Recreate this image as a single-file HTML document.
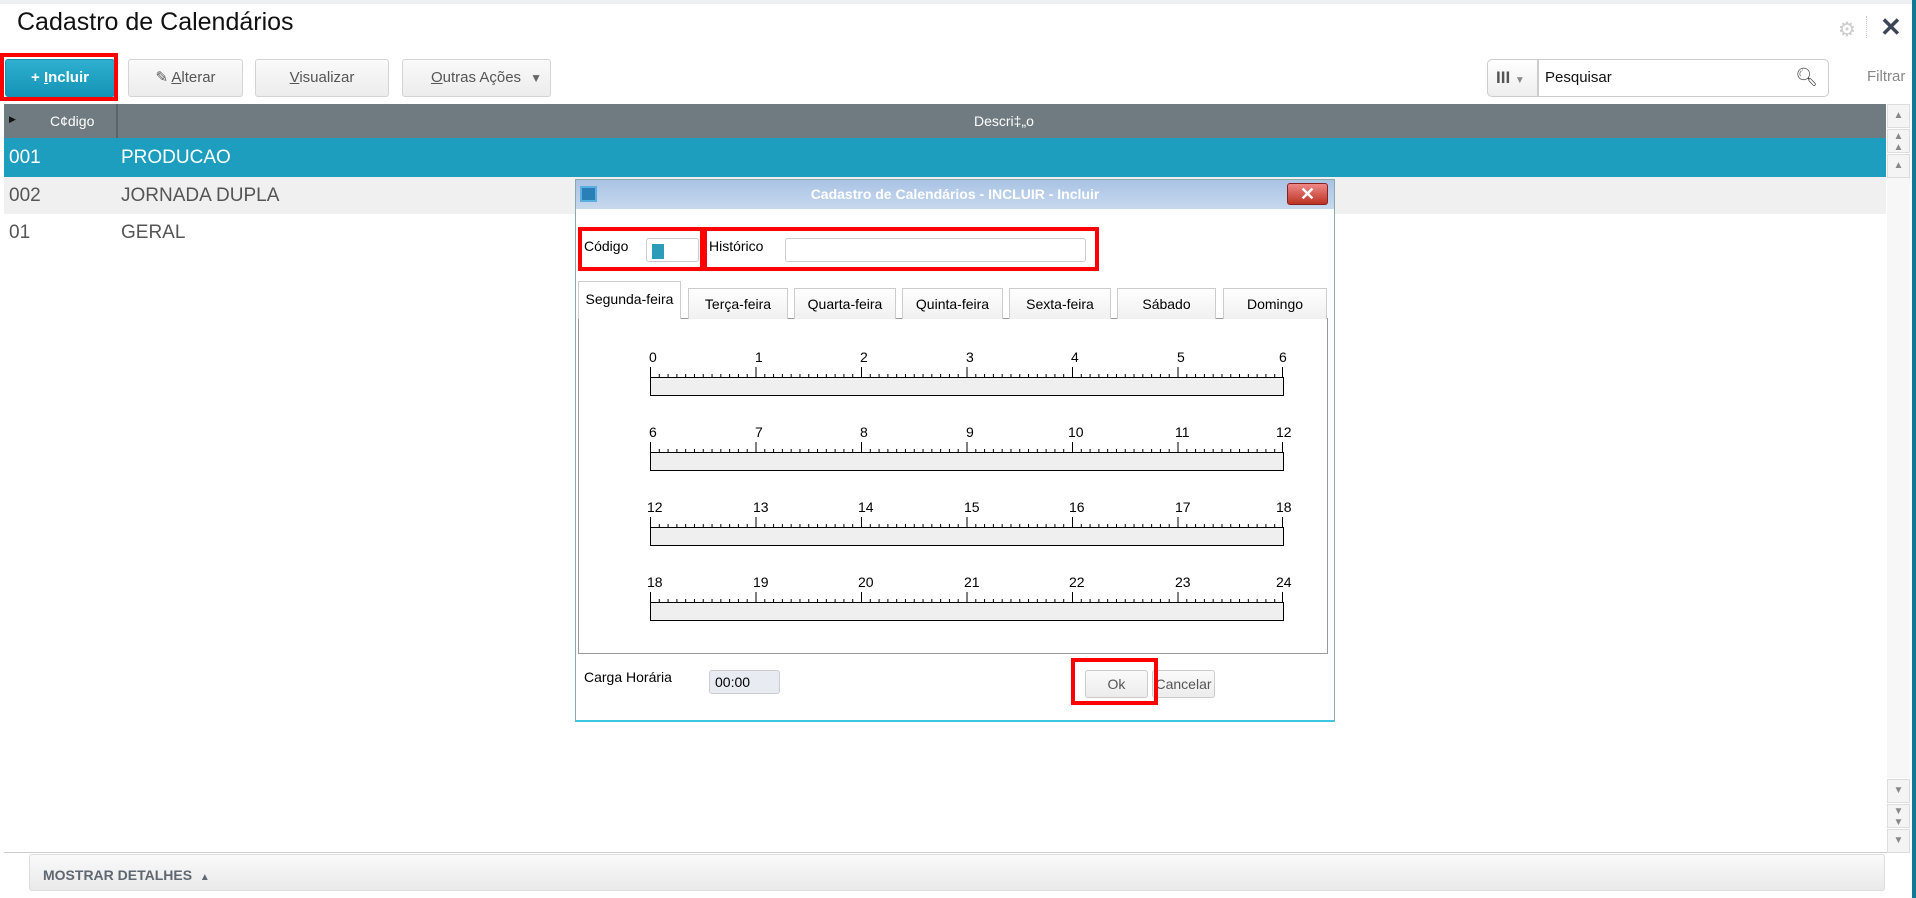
<!DOCTYPE html>
<html><head><meta charset="utf-8"><style>
*{box-sizing:border-box;margin:0;padding:0}
body{width:1916px;height:898px;position:relative;background:#fff;font-family:"Liberation Sans",sans-serif;overflow:hidden}
.a{position:absolute}
.btn{position:absolute;top:59px;height:38px;border:1px solid #d4d4d4;border-radius:3px;background:linear-gradient(#fafafa,#ececec);color:#555;font-size:15px;text-align:center;line-height:36px}
.row{position:absolute;left:4px;width:1882px;font-size:19px;color:#555}
.row span{position:absolute}
.tab{position:absolute;top:288px;height:31px;border:1px solid #ccc;border-bottom:none;background:linear-gradient(#fff,#f0f0f0);font-size:14px;color:#000;text-align:center;line-height:30px}
.red{position:absolute;border:4px solid #f00}
.sb{position:absolute;left:1887px;width:23px;height:24px;background:#f4f4f4;border:1px solid #ddd;color:#888;font-size:10px;text-align:center;line-height:22px}
</style></head><body>
<div class="a" style="left:0;top:0;width:1916px;height:4px;background:#eceef2"></div>
<div class="a" style="left:1912px;top:0;width:4px;height:898px;background:#107a94"></div>
<div class="a" style="left:17px;top:8px;font-size:25px;color:#111">Cadastro de Calendários</div>
<div class="a" style="left:1838px;top:17px;font-size:20px;color:#ccc">⚙</div>
<div class="a" style="left:1866px;top:16px;width:1px;height:22px;border-left:1px dotted #ccc"></div>
<div class="a" style="left:1880px;top:12px;font-size:26px;color:#3d4656;font-weight:bold">✕</div>

<div class="btn" style="left:5px;width:110px;background:linear-gradient(#2fb0d0,#1593b6);border-color:#1b8fb0;color:#fff;font-weight:bold">+ <u>I</u>ncluir</div>
<div class="red" style="left:0;top:53px;width:118px;height:48px"></div>
<div class="btn" style="left:128px;width:115px">✎ <u>A</u>lterar</div>
<div class="btn" style="left:255px;width:134px"><u>V</u>isualizar</div>
<div class="btn" style="left:402px;width:149px;text-align:left;padding-left:28px"><u>O</u>utras Ações <span style="position:absolute;right:8px;color:#666;font-size:12px">▼</span></div>

<div class="a" style="left:1487px;top:59px;width:52px;height:38px;border:1px solid #ccc;border-radius:5px 0 0 5px;background:linear-gradient(#fff,#eee);font-size:17px;font-weight:bold;color:#555;line-height:36px;padding-left:8px">III <span style="font-size:10px;color:#888">▼</span></div>
<div class="a" style="left:1537px;top:59px;width:292px;height:38px;border:1px solid #ccc;border-radius:0 5px 5px 0;font-size:15px;line-height:36px;padding-left:7px;color:#111">Pesquisar<span style="position:absolute;right:10px;top:-1px;font-size:18px;color:#444">&#x1F50D;&#xFE0E;</span></div>
<div class="a" style="left:1867px;top:68px;font-size:15px;color:#888">Filtrar</div>

<div class="a" style="left:4px;top:104px;width:1882px;height:34px;background:#6f7b80;color:#fff;font-size:14px">
<span class="a" style="left:5px;top:10px;font-size:9px;color:#111">▶</span>
<span class="a" style="left:46px;top:9px">C¢digo</span>
<span class="a" style="left:112px;top:0;width:2px;height:34px;background:#5a6468"></span>
<span class="a" style="left:970px;top:9px">Descri‡„o</span></div>
<div class="row" style="top:138px;height:39px;background:#1e9ebf;color:#fff"><span style="left:5px;top:9px">001</span><span style="left:117px;top:9px">PRODUCAO</span></div>
<div class="row" style="top:177px;height:37px;background:#f0f0f0"><span style="left:5px;top:8px">002</span><span style="left:117px;top:8px">JORNADA DUPLA</span></div>
<div class="row" style="top:214px;height:36px"><span style="left:5px;top:8px">01</span><span style="left:117px;top:8px">GERAL</span></div>

<div class="sb" style="top:104px">▲</div><div class="sb" style="top:129px;line-height:11px;padding-top:1px">▲<br>▲</div><div class="sb" style="top:154px">▲</div>
<div class="a" style="left:1887px;top:178px;width:23px;height:600px;background:#f7f7f7"></div>
<div class="sb" style="top:779px">▼</div><div class="sb" style="top:804px;line-height:11px;padding-top:1px">▼<br>▼</div><div class="sb" style="top:829px">▼</div>
<div class="a" style="left:4px;top:852px;width:1883px;height:1px;background:#ccc"></div>
<div class="a" style="left:29px;top:854px;width:1856px;height:37px;border:1px solid #ddd;border-radius:3px;background:linear-gradient(#fafafa,#e9e9e9);font-size:14px;font-weight:bold;color:#5f6770;padding:12px 0 0 13px">MOSTRAR DETALHES &nbsp;<span style="font-size:10px">▲</span></div>

<div class="a" style="left:575px;top:179px;width:760px;height:543px;background:#fff;border:1px solid #8aa;border-bottom:2px solid #3cc6e0"></div>
<div class="a" style="left:576px;top:180px;width:758px;height:29px;background:linear-gradient(#a9c3e4,#c7d8ee);color:#fff;font-size:14px;font-weight:bold;text-align:center;line-height:28px">Cadastro de Calendários - INCLUIR - Incluir</div>
<div class="a" style="left:580px;top:186px;width:17px;height:16px;background:#2a7fb6;border:2px solid #5aaee0"></div>
<div class="a" style="left:1287px;top:183px;width:41px;height:22px;border-radius:3px;background:linear-gradient(#e88,#b32);border:1px solid #822;color:#fff;font-weight:bold;font-size:18px;text-align:center;line-height:20px">✕</div>

<div class="a" style="left:584px;top:238px;font-size:14px">Código</div>
<div class="a" style="left:646px;top:238px;width:53px;height:24px;border:1px solid #ccc;border-radius:3px"><div class="a" style="left:5px;top:5px;width:12px;height:15px;background:#2d9cb8"></div></div>
<div class="a" style="left:709px;top:238px;font-size:14px">Histórico</div>
<div class="a" style="left:785px;top:238px;width:301px;height:24px;border:1px solid #ccc;border-radius:3px"></div>
<div class="red" style="left:578px;top:227px;width:126px;height:44px"></div>
<div class="red" style="left:703px;top:227px;width:396px;height:44px"></div>

<div class="a" style="left:578px;top:318px;width:750px;height:336px;border:1px solid #999"></div>
<div class="tab" style="left:578px;top:281px;width:103px;height:38px;background:#fff;line-height:34px">Segunda-feira</div>
<div class="tab" style="left:688px;width:100px">Terça-feira</div>
<div class="tab" style="left:794px;width:102px">Quarta-feira</div>
<div class="tab" style="left:902px;width:101px">Quinta-feira</div>
<div class="tab" style="left:1009px;width:102px">Sexta-feira</div>
<div class="tab" style="left:1117px;width:99px">Sábado</div>
<div class="tab" style="left:1223px;width:104px">Domingo</div>

<svg class="a" style="left:640px;top:340px" width="670" height="290" font-family="Liberation Sans, sans-serif" font-size="14">
<defs><pattern id="t" patternUnits="userSpaceOnUse" x="10" y="0" width="8.7917" height="300"><line x1="0.5" y1="0" x2="0.5" y2="300" stroke="#000"/></pattern></defs>
<g id="r">
<rect x="10" y="34" width="633" height="3" fill="url(#t)"/>
<g stroke="#000"><line x1="10.5" y1="27" x2="10.5" y2="37"/><line x1="116" y1="27" x2="116" y2="37"/><line x1="221.5" y1="27" x2="221.5" y2="37"/><line x1="327" y1="27" x2="327" y2="37"/><line x1="432.5" y1="27" x2="432.5" y2="37"/><line x1="538" y1="27" x2="538" y2="37"/><line x1="642.5" y1="27" x2="642.5" y2="37"/></g>
<rect x="10.5" y="37.5" width="633" height="18" fill="#efefef" stroke="#000"/>
</g>
<use href="#r" y="75"/><use href="#r" y="150"/><use href="#r" y="225"/>
<g><text x="9" y="22">0</text><text x="115" y="22">1</text><text x="220" y="22">2</text><text x="326" y="22">3</text><text x="431" y="22">4</text><text x="537" y="22">5</text><text x="639" y="22">6</text></g>
<g transform="translate(0,75)"><text x="9" y="22">6</text><text x="115" y="22">7</text><text x="220" y="22">8</text><text x="326" y="22">9</text><text x="428" y="22">10</text><text x="535" y="22">11</text><text x="636" y="22">12</text></g>
<g transform="translate(0,150)"><text x="7" y="22">12</text><text x="113" y="22">13</text><text x="218" y="22">14</text><text x="324" y="22">15</text><text x="429" y="22">16</text><text x="535" y="22">17</text><text x="636" y="22">18</text></g>
<g transform="translate(0,225)"><text x="7" y="22">18</text><text x="113" y="22">19</text><text x="218" y="22">20</text><text x="324" y="22">21</text><text x="429" y="22">22</text><text x="535" y="22">23</text><text x="636" y="22">24</text></g>
</svg>

<div class="a" style="left:584px;top:669px;font-size:14px">Carga Horária</div>
<div class="a" style="left:709px;top:670px;width:71px;height:24px;border:1px solid #ccc;border-radius:3px;background:#e8ebf2;font-size:14px;line-height:22px;padding-left:5px">00:00</div>
<div class="a" style="left:1085px;top:670px;width:63px;height:28px;border:1px solid #ccc;border-radius:3px;background:linear-gradient(#fafafa,#ececec);font-size:14px;color:#555;text-align:center;line-height:26px">Ok</div>
<div class="a" style="left:1152px;top:670px;width:63px;height:28px;border:1px solid #ccc;border-radius:3px;background:linear-gradient(#fafafa,#ececec);font-size:14px;color:#555;text-align:center;line-height:26px">Cancelar</div>
<div class="red" style="left:1071px;top:658px;width:87px;height:47px"></div>
</body></html>
